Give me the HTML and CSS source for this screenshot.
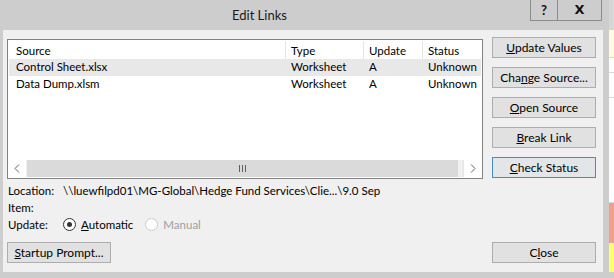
FILE: index.html
```html
<!DOCTYPE html>
<html lang="en">
<head>
  <meta charset="UTF-8">
  <title>Edit Links</title>
  <link rel="stylesheet" href="styles.css">
</head>
<body>

<div class="screen">
  <div class="dialog">
    <div class="titlebar">
      <span class="title">Edit Links</span>
      <div class="caption">
        <span class="cap cap-help">?</span>
        <span class="cap cap-close">X</span>
      </div>
    </div>

    <div class="panel">
      <div class="main">
        <div class="left">
          <div class="listbox">
            <div class="list">
              <div class="row head">
                <span class="cell">Source</span>
                <span class="cell">Type</span>
                <span class="cell">Update</span>
                <span class="cell">Status</span>
              </div>
              <div class="row sel">
                <span class="cell">Control Sheet.xlsx</span>
                <span class="cell">Worksheet</span>
                <span class="cell">A</span>
                <span class="cell">Unknown</span>
              </div>
              <div class="row">
                <span class="cell">Data Dump.xlsm</span>
                <span class="cell">Worksheet</span>
                <span class="cell">A</span>
                <span class="cell">Unknown</span>
              </div>
            </div>
            <div class="hscroll">
              <span class="arrow">
                <svg width="17" height="17" viewBox="0 0 17 17"><path d="M10 4.5 L6 8.5 L10 12.5" fill="none" stroke="#606060" stroke-width="1"/></svg>
              </span>
              <span class="thumb">
                <svg width="9" height="7" viewBox="0 0 9 7"><path d="M1.5 0V7M4.5 0V7M7.5 0V7" stroke="#606060" stroke-width="1"/></svg>
              </span>
              <span class="track-end"></span>
              <span class="arrow arrow-right">
                <svg width="17" height="17" viewBox="0 0 17 17"><path d="M7 4.5 L11 8.5 L7 12.5" fill="none" stroke="#606060" stroke-width="1"/></svg>
              </span>
            </div>
          </div>

          <div class="info">
            <div class="info-row">
              <span class="lbl">Location:</span>
              <span>\\luewfilpd01\MG-Global\Hedge Fund Services\Clie...\9.0 Sep</span>
            </div>
            <div class="info-row">
              <span class="lbl">Item:</span>
              <span></span>
            </div>
            <div class="info-row">
              <span class="lbl">Update:</span>
              <span class="radios">
                <span class="radio on"><i class="dot"></i><span><u>A</u>utomatic</span></span>
                <span class="radio off"><i class="dot"></i><span>Manual</span></span>
              </span>
            </div>
          </div>
        </div>

        <div class="actions">
          <button class="btn"><u>U</u>pdate Values</button>
          <button class="btn">Cha<u>n</u>ge Source...</button>
          <button class="btn"><u>O</u>pen Source</button>
          <button class="btn"><u>B</u>reak Link</button>
          <button class="btn focus"><u>C</u>heck Status</button>
        </div>
      </div>

      <div class="footer">
        <button class="btn"><u>S</u>tartup Prompt...</button>
        <button class="btn">C<u>l</u>ose</button>
      </div>
    </div>
  </div>

  <!-- strip of the worksheet behind the dialog -->
  <div class="sheet">
    <div class="s-top"></div>
    <div class="s-yellow"></div>
    <div class="s-cell"></div>
    <div class="s-cell s-tall"></div>
    <div class="s-cell s-big"></div>
    <div class="s-salmon"></div>
    <div class="s-lemon"></div>
  </div>
</div>

</body>
</html>
```

FILE: styles.css
```css
body {
  margin: 0;
  font-family: Lato, "Noto Sans", Arial, sans-serif;
  font-size: 11.5px;
  color: #000;
  background: #cdcdcd;
}
.screen {
  display: flex;
  width: 614px;
  height: 278px;
  overflow: hidden;
}
.dialog {
  width: 609px;
  flex: none;
  background: #cdcdcd;
}
.titlebar {
  height: 30px;
  display: flex;
  align-items: flex-start;
}
.title {
  padding-left: 232px;
  line-height: 31px;
  font-size: 13px;
  color: #1a1a1a;
}
.caption {
  margin-left: auto;
  margin-right: 7px;
  display: flex;
}
.cap {
  height: 20px;
  line-height: 20px;
  text-align: center;
  border: 1px solid #8c8c8c;
  border-top: none;
  font-weight: bold;
  font-size: 13px;
  color: #111;
}
.cap-help {
  width: 26px;
}
.cap-close {
  width: 43px;
  border-left: none;
  font-family: "DejaVu Sans", sans-serif;
}
.panel {
  margin: 0 6px 0 3px;
  height: 242px;
  box-sizing: border-box;
  padding: 7px 7px 9px 4px;
  background: #f0f0f0;
  display: flex;
  flex-direction: column;
}
.main {
  display: flex;
  gap: 9px;
}
.left {
  width: 476px;
}
.listbox {
  margin-top: 2px;
  height: 140px;
  box-sizing: border-box;
  border: 1px solid #828282;
  padding: 1px;
  background: #fff;
  display: flex;
  flex-direction: column;
}
.list {
  flex: 1;
  overflow: hidden;
}
.row {
  display: grid;
  grid-template-columns: 277px 78px 59px 120px;
  height: 17px;
  line-height: 16px;
  white-space: nowrap;
}
.row.head {
  height: 18px;
  line-height: 19px;
}
.row.sel {
  background: #e8e8e8;
}
.cell {
  padding-left: 5px;
  overflow: hidden;
}
.cell:first-child {
  padding-left: 7px;
}
.head .cell {
  border-right: 1px solid #e5e5e5;
}
.hscroll {
  height: 17px;
  display: flex;
  background: #f0f0f0;
}
.arrow {
  width: 17px;
  height: 17px;
  background: #fff;
  flex: none;
}
.arrow-right {
  border-left: 1px solid #e3e3e3;
}
.thumb {
  flex: 1;
  margin-left: 1px;
  background: #dadada;
  display: flex;
  align-items: center;
  justify-content: center;
}
.track-end {
  width: 5px;
  background: #f0f0f0;
}
.info {
  margin-top: 3px;
  padding-left: 1px;
}
.info-row {
  display: flex;
  height: 17px;
  line-height: 17px;
  white-space: nowrap;
}
.lbl {
  width: 55px;
  flex: none;
}
.radios {
  display: flex;
  gap: 12px;
}
.radio {
  display: flex;
  align-items: center;
  gap: 5px;
}
.dot {
  width: 11px;
  height: 11px;
  border: 1px solid #333;
  border-radius: 50%;
  background: #fff;
  position: relative;
}
.radio.on .dot::after {
  content: "";
  position: absolute;
  left: 3px;
  top: 3px;
  width: 5px;
  height: 5px;
  border-radius: 50%;
  background: #333;
}
.radio.off {
  color: #a0a0a0;
}
.radio.off .dot {
  border-color: #cccccc;
}
.actions {
  width: 104px;
  display: flex;
  flex-direction: column;
  gap: 9px;
}
.btn {
  height: 21px;
  width: 104px;
  padding: 0;
  font-family: inherit;
  font-size: 12px;
  color: #000;
  background: #e1e1e1;
  border: 1px solid #adadad;
  text-align: center;
}
.btn.focus {
  border-color: #4d8ac4;
  background: #e3e6e9;
}
.footer {
  margin-top: auto;
  display: flex;
  justify-content: space-between;
}
.sheet {
  flex: 1;
  background: #fff;
  display: flex;
  flex-direction: column;
}
.s-top {
  height: 30px;
  background: #d6d6d6;
}
.s-yellow {
  height: 27px;
  background: #fffbdf;
  border-bottom: 1px solid #d8d8d8;
}
.s-cell {
  height: 14px;
  border-bottom: 1px solid #d8d8d8;
}
.s-tall {
  height: 24px;
}
.s-big {
  height: 104px;
}
.s-salmon {
  height: 40px;
  background: #f3a08a;
}
.s-lemon {
  flex: 1;
  background: #ffff6e;
  border-bottom: 6px solid #cdcdcd;
}
```
